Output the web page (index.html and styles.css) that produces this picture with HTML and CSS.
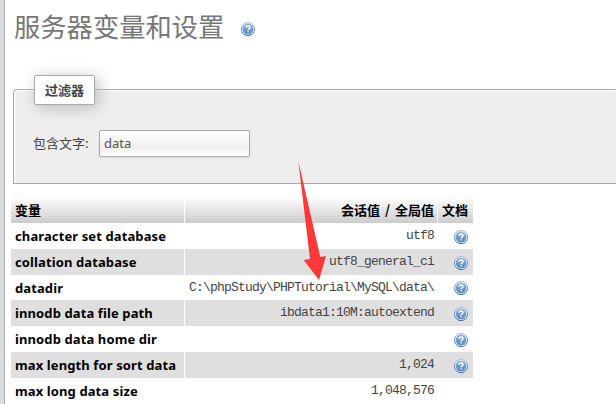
FILE: index.html
```
<!DOCTYPE html>
<html lang="zh-CN">
<head>
<meta charset="utf-8">
<title>服务器变量和设置</title>
<link rel="stylesheet" href="styles.css">
</head>
<body>
<svg class="defs" aria-hidden="true">
  <defs>
    <linearGradient id="disc" x1="0" y1="0" x2="0" y2="1">
      <stop offset="0" stop-color="#8fb2da"/><stop offset="1" stop-color="#5484be"/>
    </linearGradient>
    <linearGradient id="rim" x1="0" y1="0" x2="0" y2="1">
      <stop offset="0" stop-color="#a9c3e2"/><stop offset="1" stop-color="#3b6ba6"/>
    </linearGradient>
    <symbol id="help" viewBox="0 0 16 16">
      <circle cx="8" cy="8" r="6.6" fill="#d9e6f5" stroke="url(#rim)" stroke-width="1"/>
      <circle cx="8" cy="8" r="5.2" fill="url(#disc)"/>
      <path d="M6.1 6.7C6.1 4.4 10 4.4 10 6.5C10 7.8 8.1 7.8 8.1 9.2M8.1 10.2V11.6" fill="none" stroke="#fff" stroke-width="1.5"/>
    </symbol>
  </defs>
</svg>
<main class="page">
  <h2 class="title"><span>服务器变量和设置</span><svg class="help"><use href="#help"/></svg></h2>
  <section class="filters">
    <div class="legend">过滤器</div>
    <div class="field"><label for="filter">包含文字:</label><input id="filter" type="text" value="data"></div>
  </section>
  <table class="vars">
    <colgroup><col class="c-name"><col class="c-value"><col class="c-doc"></colgroup>
    <thead><tr><th>变量</th><th class="value-head">会话值 / 全局值</th><th class="doc-head">文档</th></tr></thead>
    <tbody>
      <tr><th>character set database</th><td>utf8</td><td><svg class="help"><use href="#help"/></svg></td></tr>
      <tr><th>collation database</th><td>utf8_general_ci</td><td><svg class="help"><use href="#help"/></svg></td></tr>
      <tr class="snug"><th>datadir</th><td>C:\phpStudy\PHPTutorial\MySQL\data\</td><td><svg class="help"><use href="#help"/></svg></td></tr>
      <tr><th>innodb data file path</th><td>ibdata1:10M:autoextend</td><td><svg class="help"><use href="#help"/></svg></td></tr>
      <tr><th>innodb data home dir</th><td></td><td><svg class="help"><use href="#help"/></svg></td></tr>
      <tr><th>max length for sort data</th><td>1,024</td><td><svg class="help"><use href="#help"/></svg></td></tr>
      <tr><th>max long data size</th><td>1,048,576</td><td></td></tr>
    </tbody>
  </table>
</main>
<svg class="arrow" viewBox="0 0 32 120"><path d="M1.3 0L23.3 96L29 95L22 119L6.7 99L13 98Z"/></svg>
</body>
</html>
```
FILE: styles.css
```
* { box-sizing: border-box; }
body {
  margin: 0;
  height: 404px;
  overflow: hidden;
  background: #fff;
  color: #444;
  font: 13px "Noto Sans", "Noto Sans CJK SC", sans-serif;
}
.defs { position: absolute; width: 0; height: 0; }
.page {
  height: 404px;
  padding-left: 7px;
  border-left: 4px solid #dadde0;
  box-shadow: inset 1px 0 #aaa;
}
.title {
  display: flex;
  align-items: center;
  height: 56px;
  margin: 0;
  padding-left: 3px;
  color: #777;
  font: 26.3px/54px "Noto Sans CJK SC", sans-serif;
}
.title span { margin-top: -4px; }
.title .help { margin: 2px 0 0 16px; }
.help { display: block; width: 16px; height: 16px; }
.filters {
  height: 95px;
  margin: 33px 0 13px 2px;
  padding-left: 20px;
  border: 1px solid #aaa;
  border-right: 0;
  border-radius: 4px 0 0 0;
  background: #eee;
  box-shadow: inset 1px 1px 2px #fff;
}
.legend {
  width: 61px;
  height: 30px;
  margin-top: -15px;
  border: 1px solid #aaa;
  border-radius: 2px;
  background: #fff;
  box-shadow: 3px 3px 15px #bbb;
  color: #444;
  font: bold 13px/28px "Noto Sans CJK SC", sans-serif;
  text-align: center;
}
.field { display: flex; align-items: center; height: 28px; margin-top: 24px; }
.field label { width: 66px; margin-left: -1px; font: 13px/28px "Noto Sans CJK SC", sans-serif; }
.field input {
  width: 151px;
  height: 27px;
  padding: 0 4px;
  border: 1px solid #aaa;
  border-radius: 2px;
  background: linear-gradient(#fff, #eee 65%, #fff);
  box-shadow: 0 1px 2px #ddd;
  color: #555;
  font: 13px "Noto Sans", sans-serif;
}
.vars {
  width: 462px;
  table-layout: fixed;
  border-collapse: separate;
  border-spacing: 0;
  color: #000;
}
.c-name { width: 173px; }
.c-value { width: 253px; }
.c-doc { width: 36px; }
.vars th, .vars td {
  height: 26px;
  padding: 0 4px;
  border-left: 1px solid #fff;
  line-height: 24px;
  text-align: left;
  white-space: nowrap;
}
.vars .snug th, .vars .snug td { height: 25px; }
.vars th:first-child { border-left: 0; }
.vars thead th {
  background: linear-gradient(#fff, #ccc);
  font-family: "Noto Sans CJK SC", sans-serif;
}
.vars thead .value-head { padding-right: 3px; text-align: right; word-spacing: 2px; }
.vars tbody th { font: bold 13px/24px "Noto Sans", sans-serif; letter-spacing: 0.11px; }
.vars tbody td {
  padding-right: 3px;
  color: #444;
  font: 13px/24px "Liberation Mono", monospace;
  letter-spacing: -0.802px;
  text-align: right;
}
.vars tbody td:last-child { padding-right: 4px; border-left: 0; }
.vars tbody td .help { margin: 1px 0 0 auto; }
.vars tbody tr:nth-child(even) { background: #dfdfdf; }
.arrow { position: absolute; left: 297px; top: 161px; width: 32px; height: 120px; fill: #fc3838; }
```
